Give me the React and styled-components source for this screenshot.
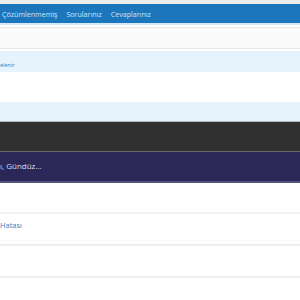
import React from 'react';
import styled, { createGlobalStyle } from 'styled-components';

const Global = createGlobalStyle`
  html, body { margin: 0; padding: 0; background: #fff; }
  body { font-family: "Open Sans", "Liberation Sans", Arial, sans-serif; overflow: hidden; }
`;

const Page = styled.div`
  width: 300px;
  height: 300px;
  overflow: hidden;
  display: flex;
  flex-direction: column;
  & > * { flex-shrink: 0; }
`;

const TopStrip = styled.div`
  height: 4px;
  background: #ececec;
`;

const TabBar = styled.div`
  height: 19px;
  background: #1c76bb;
  border-bottom: 2px solid #d5e8f6;
  display: flex;
  align-items: center;
  gap: 9px;
  padding-left: 2px;
`;

const Tab = styled.span`
  color: #cfe4f5;
  font-size: 7.1px;
  white-space: nowrap;
`;

const Band = styled.div`
  height: ${p => p.h}px;
  background: ${p => p.bg || '#fff'};
  border-top: ${p => p.top || 'none'};
  border-bottom: ${p => p.bottom || 'none'};
  display: flex;
  align-items: ${p => p.align || 'center'};
  overflow: hidden;
  white-space: nowrap;
`;

const Gap = styled.div`
  height: ${p => p.h}px;
`;

const SmallNote = styled.span`
  color: #2f7fc0;
  font-size: 5.5px;
  padding-bottom: 3px;
`;

const Title = styled.span`
  color: #dcdcf0;
  font-size: 8px;
  margin-top: -3px;
`;

const Link = styled.span`
  color: #2f7fc0;
  font-size: 7.5px;
  margin-top: 6px;
`;

export default function App() {
  return (
    <Page>
      <Global />
      <TopStrip />
      <TabBar>
        <Tab>Çözümlenmemiş</Tab>
        <Tab>Sorularınız</Tab>
        <Tab>Cevaplarınız</Tab>
      </TabBar>
      <Gap h={2} />
      <Band h={20} bg="#fafafa" top="1px solid #e6e6e6" bottom="1px solid #e6e6e6" />
      <Gap h={2} />
      <Band h={21} bg="#e7f3fc" align="flex-end">
        <SmallNote>elenir</SmallNote>
      </Band>
      <Band h={30} bg="#fff" />
      <Band h={19} bg="#e7f3fc" bottom="1px solid #b5b7ba" />
      <Band h={29} bg="#303030" bottom="1px solid #68666e" />
      <Band h={29} bg="#2b2858" bottom="2px solid #56547e">
        <Title>ı, Gündüz...</Title>
      </Band>
      <Band h={29} bg="#fff" bottom="2px solid #f1f1f1" />
      <Band h={26} bg="#fff" bottom="1px solid #f6f6f6" align="flex-start">
        <Link>Hatası</Link>
      </Band>
      <Gap h={3} />
      <Band h={30} bg="#fff" top="2px solid #eeeeee" bottom="2px solid #eeeeee" />
      <Band h={30} bg="#fff" />
    </Page>
  );
}
